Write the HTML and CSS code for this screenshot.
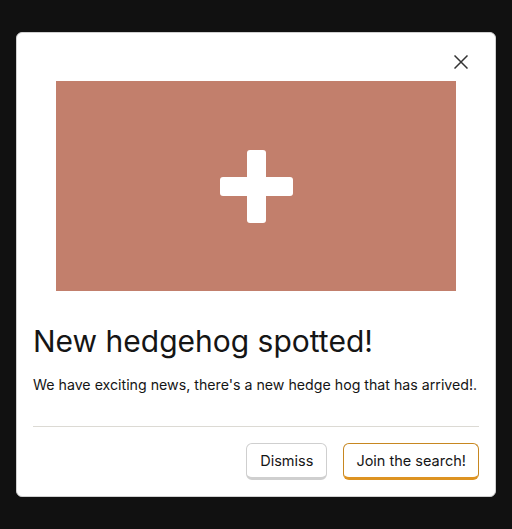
FILE: index.html
```html
<!DOCTYPE html>
<html>
<head>
<meta charset="utf-8">
<link rel="stylesheet" href="styles.css">
</head>
<body>
<div class="modal">
  <div class="modal-top">
    <button class="close" aria-label="Close">
      <svg width="14" height="14" viewBox="0 0 14 14"><path d="M0.5 0.5L13.5 13.5M13.5 0.5L0.5 13.5" stroke="#333" stroke-width="1.5" fill="none"/></svg>
    </button>
  </div>
  <div class="hero">
    <svg width="73" height="73" viewBox="0 0 73 73"><rect x="27" y="0" width="19" height="73" rx="3" fill="#fff"/><rect x="0" y="27" width="73" height="19" rx="3" fill="#fff"/></svg>
  </div>
  <h1 class="title">New hedgehog spotted!</h1>
  <p class="text">We have exciting news, there's a new hedge hog that has arrived!.</p>
  <div class="divider"></div>
  <div class="actions">
    <button class="btn btn-secondary">Dismiss</button>
    <button class="btn btn-primary">Join the search!</button>
  </div>
</div>
</body>
</html>
```
FILE: styles.css
```css
html, body { margin: 0; padding: 0; }
body {
  background: #111111;
  width: 512px;
  height: 529px;
  font-family: Inter, "Noto Sans", sans-serif;
  padding-top: 32px;
  box-sizing: border-box;
}
.modal {
  width: 480px;
  margin-left: 16px;
  box-sizing: border-box;
  background: #fff;
  border: 1px solid #d0d0d0;
  border-radius: 6px;
  padding: 16px 16px 16px 16px;
  display: flex;
  flex-direction: column;
}
.modal-top {
  display: flex;
  justify-content: flex-end;
  height: 32px;
}
.close {
  background: none;
  border: 0;
  padding: 6px 11px 0 0;
  width: 32px;
  height: 32px;
  box-sizing: border-box;
  display: flex;
  justify-content: flex-end;
  align-items: flex-start;
  cursor: pointer;
}
.hero {
  width: 400px;
  height: 210px;
  margin: 0 auto;
  background: #c27f6c;
  display: flex;
  align-items: center;
  justify-content: center;
}
.title {
  margin: 30px 0 0 0;
  font-size: 30px;
  font-weight: 400;
  line-height: 40px;
  color: #151515;
  letter-spacing: 0;
}
.text {
  margin: 12px 0 0 0;
  font-size: 14.2px;
  line-height: 24px;
  color: #151515;
  white-space: nowrap;
}
.divider {
  height: 1px;
  background: #dcdad4;
  margin-top: 29px;
}
.actions {
  display: flex;
  justify-content: flex-end;
  gap: 16px;
  margin-top: 16px;
}
.btn {
  font-family: Inter, "Noto Sans", sans-serif;
  font-size: 14.5px;
  color: #151515;
  background: #fff;
  height: 37px;
  padding: 0 12px;
  border-radius: 6px;
  box-sizing: border-box;
  cursor: pointer;
}
.btn-secondary {
  border: 1px solid #cfcfcf;
  border-bottom: 3px solid #cfcfcf;
  padding: 0 13px;
}
.btn-primary {
  border: 1px solid #c78720;
  border-bottom: 3px solid #dd9322;
}
```
